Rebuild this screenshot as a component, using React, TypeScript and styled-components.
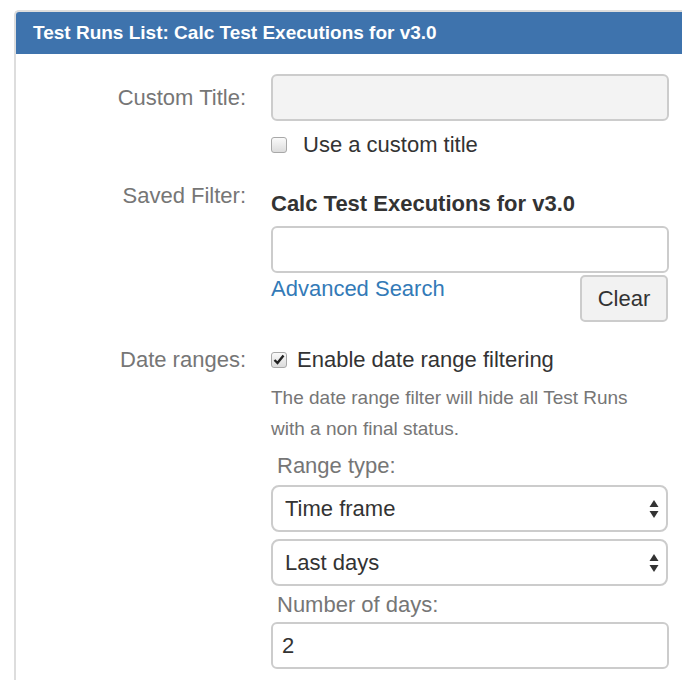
import styled, { createGlobalStyle } from "styled-components";

const GlobalStyle = createGlobalStyle`
  html, body {
    margin: 0;
    padding: 0;
    background: #fff;
    overflow: hidden;
  }
  body {
    font-family: "Liberation Sans", Arial, Helvetica, sans-serif;
    color: #333;
  }
`;

const Panel = styled.div`
  margin: 10px 0 0 14px;
  width: calc(100vw - 16px);
  border: 2px solid #ddd;
  border-right: none;
  border-radius: 5px 0 0 0;
  background: #fff;
  min-height: 700px;
`;

const Heading = styled.div`
  height: 42px;
  background: #3e73ad;
  color: #fff;
  font-weight: bold;
  font-size: 19px;
  display: flex;
  align-items: center;
  padding-left: 17px;
  border-radius: 3px 0 0 0;
`;

const Body = styled.div`
  padding-top: 20px;
  display: flex;
  flex-direction: column;
  gap: 24px;
`;

const Row = styled.div`
  display: grid;
  grid-template-columns: 230px 398px;
  column-gap: 25px;
`;

const Label = styled.div<{ top?: number }>`
  text-align: right;
  font-size: 22px;
  line-height: 27px;
  color: #767676;
  padding-top: ${(p) => p.top ?? 0}px;
`;

const Controls = styled.div`
  display: flex;
  flex-direction: column;
`;

const TextInput = styled.input<{ top?: number }>`
  box-sizing: border-box;
  width: 398px;
  height: 47px;
  margin-top: ${(p) => p.top ?? 0}px;
  border: 2px solid #ccc;
  border-radius: 6px;
  background: #fff;
  font: inherit;
  font-size: 22px;
  color: #333;
  padding: 0 9px;
  outline: none;

  &:disabled {
    background: #f3f3f3;
  }
`;

const CheckLine = styled.label<{ gap: number; top?: number }>`
  display: flex;
  align-items: center;
  gap: ${(p) => p.gap}px;
  font-size: 22px;
  line-height: 27px;
  color: #333;
  margin-top: ${(p) => p.top ?? 0}px;
`;

const Box = styled.span`
  box-sizing: border-box;
  flex: none;
  width: 16px;
  height: 16px;
  border: 1px solid #a8a8a8;
  border-radius: 3px;
  background: linear-gradient(#fafafa, #dcdcdc);
  display: flex;
  align-items: center;
  justify-content: center;
`;

const FilterName = styled.div`
  margin-top: 8px;
  font-size: 22px;
  font-weight: bold;
  line-height: 27px;
  color: #333;
`;

const LinkRow = styled.div`
  display: flex;
  justify-content: space-between;
  align-items: flex-start;
`;

const Link = styled.a`
  color: #337ab7;
  font-size: 22px;
  line-height: 27px;
  margin-top: 2px;
  text-decoration: none;
`;

const Button = styled.button`
  box-sizing: border-box;
  margin-top: 2px;
  margin-right: 1px;
  width: 88px;
  height: 47px;
  border: 2px solid #ccc;
  border-radius: 5px;
  background: #f2f2f2;
  font: inherit;
  font-size: 22px;
  color: #333;
`;

const Help = styled.p`
  margin: 9px 0 0;
  font-size: 19px;
  line-height: 31px;
  color: #767676;
`;

const SubLabel = styled.div<{ top: number }>`
  margin-top: ${(p) => p.top}px;
  padding-left: 6px;
  font-size: 22px;
  line-height: 27px;
  color: #767676;
`;

const SelectWrap = styled.div<{ top: number }>`
  position: relative;
  width: 397px;
  margin-top: ${(p) => p.top}px;
`;

const Select = styled.select`
  appearance: none;
  box-sizing: border-box;
  display: block;
  width: 100%;
  height: 47px;
  border: 2px solid #ccc;
  border-radius: 8px;
  background: #fff;
  font: inherit;
  font-size: 22px;
  color: #333;
  padding: 0 12px;
  outline: none;
`;

const Arrows = styled.svg`
  position: absolute;
  right: 8px;
  top: 13px;
  pointer-events: none;
`;

function Check({ checked }: { checked?: boolean }) {
  return (
    <Box>
      {checked && (
        <svg width="12" height="11" viewBox="0 0 12 11">
          <path d="M1.5 6 L4.5 9 L10.5 1.5" fill="none" stroke="#222" strokeWidth="2.4" />
        </svg>
      )}
    </Box>
  );
}

function Dropdown({ value, top }: { value: string; top: number }) {
  return (
    <SelectWrap top={top}>
      <Select defaultValue={value}>
        <option>{value}</option>
      </Select>
      <Arrows width="12" height="22" viewBox="0 0 12 22">
        <path d="M6 2 L10.5 9 L1.5 9 Z" fill="#333" />
        <path d="M6 20 L10.5 13 L1.5 13 Z" fill="#333" />
      </Arrows>
    </SelectWrap>
  );
}

export default function App() {
  return (
    <>
      <GlobalStyle />
      <Panel>
        <Heading>Test Runs List: Calc Test Executions for v3.0</Heading>
        <Body>
          <Row>
            <Label top={10}>Custom Title:</Label>
            <Controls>
              <TextInput disabled />
              <CheckLine gap={16} top={10}>
                <Check />
                Use a custom title
              </CheckLine>
            </Controls>
          </Row>
          <Row>
            <Label>Saved Filter:</Label>
            <Controls>
              <FilterName>Calc Test Executions for v3.0</FilterName>
              <TextInput top={9} />
              <LinkRow>
                <Link href="#">Advanced Search</Link>
                <Button>Clear</Button>
              </LinkRow>
            </Controls>
          </Row>
          <Row>
            <Label>Date ranges:</Label>
            <Controls>
              <CheckLine gap={10}>
                <Check checked />
                Enable date range filtering
              </CheckLine>
              <Help>
                The date range filter will hide all Test Runs
                <br />
                with a non final status.
              </Help>
              <SubLabel top={8}>Range type:</SubLabel>
              <Dropdown value="Time frame" top={6} />
              <Dropdown value="Last days" top={7} />
              <SubLabel top={5}>Number of days:</SubLabel>
              <TextInput defaultValue="2" top={4} />
            </Controls>
          </Row>
        </Body>
      </Panel>
    </>
  );
}
